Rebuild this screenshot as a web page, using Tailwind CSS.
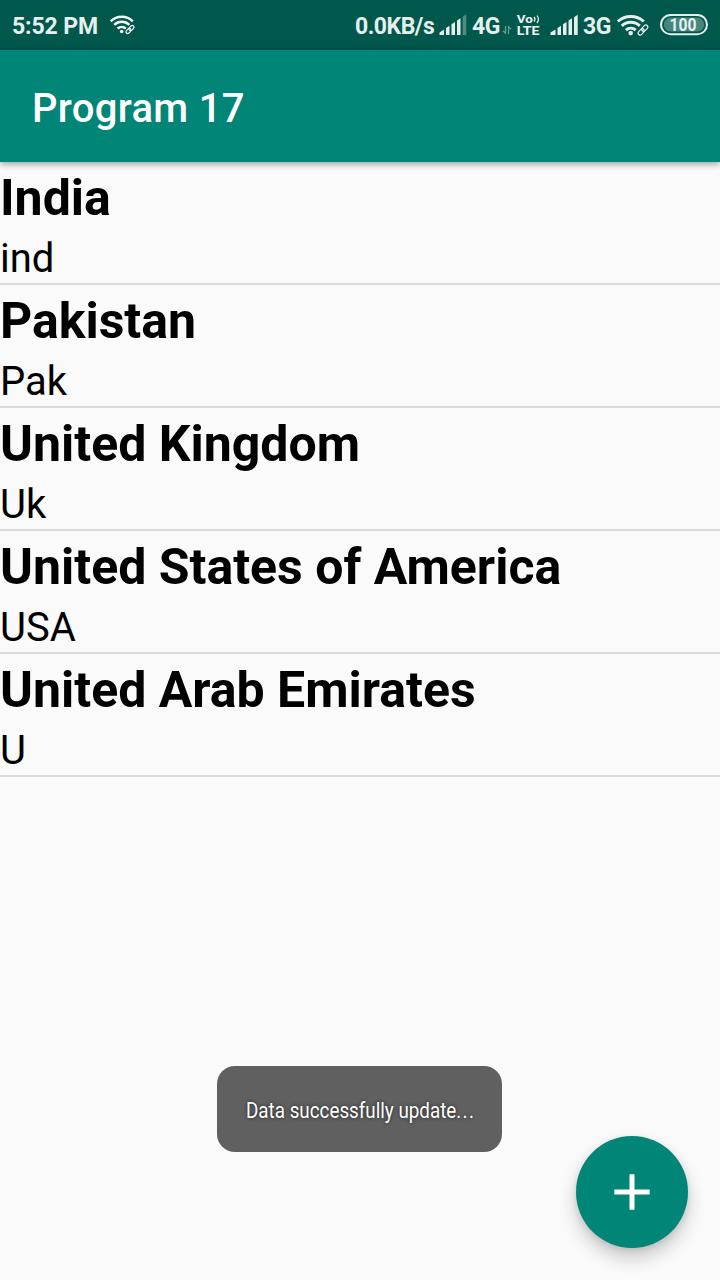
<!DOCTYPE html>
<html lang="en">
<head>
<meta charset="utf-8">
<meta name="viewport" content="width=device-width, initial-scale=1">
<title>Program 17</title>
<script src="https://cdn.jsdelivr.net/npm/@tailwindcss/browser@4"></script>
</head>
<body class="bg-[#fafafa] font-['Roboto',sans-serif]">
<div class="relative flex h-[1280px] w-[720px] flex-col overflow-hidden bg-[#fafafa]">
  <header class="z-10 shrink-0">
    <div class="flex h-[50px] items-center bg-[#00574b] text-[#e6efed]">
      <span class="ml-3 w-[98px] pt-[3px] text-[23px] leading-[50px] font-bold tracking-[-0.1px] whitespace-nowrap">5:52 PM</span>
      <svg class="h-[50px] w-[26px]" viewBox="110 0 26 50" fill="none" stroke="#f4f8f7">
        <path d="M110.800 21.300A15.800 15.800 0 0 1 132.800 21.300M114.200 24.900A11 11 0 0 1 129.400 24.900M117.600 28.500A6 6 0 0 1 125.800 28.500" stroke-width="2.500"/>
        <circle cx="121.700" cy="31.500" r="1.800" fill="#f4f8f7" stroke="none"/>
        <g transform="rotate(-45 130 29.500)" stroke-width="1.200"><rect x="125" y="27.800" width="5.800" height="3.400" rx="1.700"/><rect x="129.200" y="27.800" width="5.800" height="3.400" rx="1.700"/></g>
      </svg>
      <span class="ml-auto w-[84px] pt-[3px] text-[23px] leading-[50px] font-bold tracking-[-0.5px] whitespace-nowrap">0.0KB/s</span>
      <svg class="h-[50px] w-[33px]" viewBox="439 0 33 50" fill="#e6efed">
        <path d="M439.500 35v-2.500l4.500-3V35zM446 35v-7l3.500-2.200V35zM451.500 35V24.200l3.500-2.200V35zM457 35V20.500l3.500-2.200V35z"/>
        <path opacity=".35" d="M462.600 35V16.800l3.700-2.500V35z"/>
      </svg>
      <span class="w-[30px] pt-[3px] text-[23px] leading-[50px] font-bold tracking-[-0.5px] whitespace-nowrap">4G</span>
      <svg class="h-[50px] w-[14px]" viewBox="502 0 14 50" fill="none" stroke="#e6efed" stroke-opacity=".45" stroke-width="1.300">
        <path d="M505.500 26v7.300l-2.500-2.500M508.500 34v-7.300l2.500 2.500"/>
      </svg>
      <svg class="h-[50px] w-[34px] font-['Roboto',sans-serif] font-bold" viewBox="516 0 34 50" fill="#f4f8f7">
        <text x="516.700" y="23" font-size="11.500" textLength="16" lengthAdjust="spacingAndGlyphs">Vo</text>
        <path d="M534 17q2 2.300 0 4.500M537 15.500q3 3.800 0 7.500" fill="none" stroke="#f4f8f7" stroke-width="1.200"/>
        <text x="516.700" y="35" font-size="12" textLength="22.800" lengthAdjust="spacingAndGlyphs">LTE</text>
      </svg>
      <svg class="h-[50px] w-[33px]" viewBox="550 0 33 50" fill="#e6efed">
        <path d="M550.500 35v-2.500l5-3V35zM557.500 35v-7l3.500-2.200V35zM563 35V24.200l3.500-2.200V35zM568.500 35V20.500l3.500-2.200V35zM574 35V17.200l3.700-2.500V35z"/>
      </svg>
      <span class="w-[34px] pt-[3px] text-[23px] leading-[50px] font-bold tracking-[-0.5px] whitespace-nowrap">3G</span>
      <svg class="h-[50px] w-[43px]" viewBox="617 0 43 50" fill="none" stroke="#e6efed">
        <path d="M617.800 21.500A19.400 19.400 0 0 1 643.800 21.500M621.800 25.900A13 13 0 0 1 639.800 25.900M625.900 30.100A7 7 0 0 1 635.700 30.100" stroke-width="2.900"/>
        <circle cx="630.700" cy="33.100" r="2.300" fill="#e6efed" stroke="none"/>
        <g transform="rotate(-47 643 30)" stroke-width="1.200"><rect x="636.800" y="28" width="7.200" height="4" rx="2"/><rect x="642" y="28" width="7.200" height="4" rx="2"/></g>
      </svg>
      <svg class="h-[50px] w-[60px] font-['Roboto',sans-serif] font-bold" viewBox="660 0 60 50">
        <rect x="661" y="15" width="46" height="19.200" rx="9.600" fill="none" stroke="#e6efed" stroke-width="2"/>
        <rect x="663.800" y="17.600" width="40.400" height="14" rx="7" fill="#45867d"/>
        <text x="669.500" y="31" font-size="18" textLength="27" lengthAdjust="spacingAndGlyphs" fill="#e6efed">100</text>
      </svg>
    </div>
    <div class="flex h-28 items-center bg-[#008577] pl-8 shadow-[0_2px_7px_rgba(0,0,0,0.38)]">
      <h1 class="pt-1.5 text-[40px] leading-[48px] font-medium tracking-[0.3px] text-white">Program 17</h1>
    </div>
  </header>

  <ul class="text-black">
    <li class="flex h-[123px] flex-col border-b-2 border-[#dadada]">
      <span class="h-[67px] pt-[5px] text-[50px] leading-[62px] font-bold">India</span>
      <span class="pt-[5px] text-[40px] leading-[50px]">ind</span>
    </li>
    <li class="flex h-[123px] flex-col border-b-2 border-[#dadada]">
      <span class="h-[67px] pt-[5px] text-[50px] leading-[62px] font-bold">Pakistan</span>
      <span class="pt-[5px] text-[40px] leading-[50px]">Pak</span>
    </li>
    <li class="flex h-[123px] flex-col border-b-2 border-[#dadada]">
      <span class="h-[67px] pt-[5px] text-[50px] leading-[62px] font-bold">United Kingdom</span>
      <span class="pt-[5px] text-[40px] leading-[50px]">Uk</span>
    </li>
    <li class="flex h-[123px] flex-col border-b-2 border-[#dadada]">
      <span class="h-[67px] pt-[5px] text-[50px] leading-[62px] font-bold">United States of America</span>
      <span class="pt-[5px] text-[40px] leading-[50px]">USA</span>
    </li>
    <li class="flex h-[123px] flex-col border-b-2 border-[#dadada]">
      <span class="h-[67px] pt-[5px] text-[50px] leading-[62px] font-bold">United Arab Emirates</span>
      <span class="pt-[5px] text-[40px] leading-[50px]">U</span>
    </li>
  </ul>

  <div class="absolute top-[1066px] left-[217px] flex h-[86px] w-[285px] items-center rounded-[18px] bg-[#606060] pl-[29px]">
    <p class="origin-left scale-x-[0.875] pt-[3px] text-[21.500px] leading-8 whitespace-nowrap text-white [text-shadow:0_0_4px_rgba(0,0,0,0.7)]">Data successfully update<span class="tracking-[1.500px]">...</span></p>
  </div>

  <button aria-label="Add" class="absolute top-[1136px] left-[576px] flex size-28 items-center justify-center rounded-full bg-[#008577] shadow-[0_10px_18px_rgba(0,0,0,0.2),0_2px_6px_rgba(0,0,0,0.1)]">
    <svg class="size-9" viewBox="0 0 36 36" fill="none" stroke="#fff" stroke-width="5"><path d="M18 .3v35.400M.3 18h35.400"/></svg>
  </button>
</div>
</body>
</html>
